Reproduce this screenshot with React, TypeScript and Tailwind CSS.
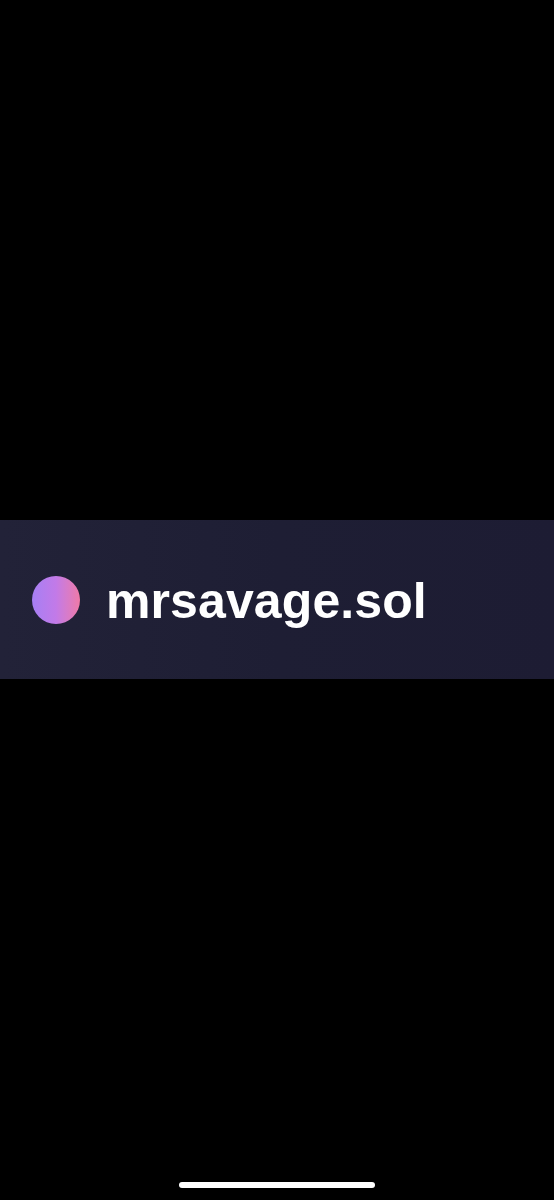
export default function App() {
  return (
    <div className="min-h-[1200px] bg-black flex flex-col">
      <div className="h-[520px]" />
      <div className="h-[159px] bg-gradient-to-r from-[#222238] via-[#1e1e34] to-[#1d1c33] flex items-center pl-[32px] gap-[26px]">
        <div className="w-[48px] h-[48px] rounded-full bg-gradient-to-r from-[#a67ff4] via-[#c27ae8] to-[#ef79a6]" />
        <span
          className="text-white font-bold text-[50px] leading-none tracking-[0.1px] pt-[2px]"
          style={{ fontFamily: '"Liberation Sans", Arial, sans-serif' }}
        >
          mrsavage.sol
        </span>
      </div>
      <div className="flex-1" />
      <div className="flex justify-center pb-[12px]">
        <div className="w-[196px] h-[6px] rounded-full bg-white" />
      </div>
    </div>
  )
}
